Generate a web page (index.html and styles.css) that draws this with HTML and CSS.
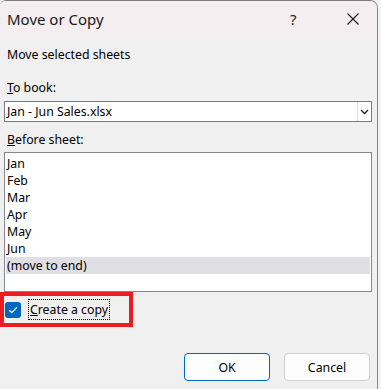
FILE: index.html
```html
<!DOCTYPE html>
<html>
<head>
<meta charset="utf-8">
<link rel="stylesheet" href="styles.css">
</head>
<body>
<div class="window">
  <div class="titlebar">
    <span class="title">Move or Copy</span>
    <span class="help">?</span>
    <span class="close">
      <svg width="14" height="14" viewBox="0 0 14 14"><path d="M1.5 1.5 L12.5 12.5 M12.5 1.5 L1.5 12.5" stroke="#1a1a1a" stroke-width="1.1" fill="none"/></svg>
    </span>
  </div>
  <div class="content">
    <div class="label first">Move selected sheets</div>
    <div class="label"><u>T</u>o book:</div>
    <div class="select">
      <span class="select-value">Jan - Jun Sales.xlsx</span>
      <span class="select-arrow">
        <svg width="9" height="6" viewBox="0 0 9 6"><path d="M1 1 L4.5 4.5 L8 1" stroke="#222" stroke-width="1.3" fill="none"/></svg>
      </span>
    </div>
    <div class="label after-select"><u>B</u>efore sheet:</div>
    <div class="listbox">
      <div class="item">Jan</div>
      <div class="item">Feb</div>
      <div class="item">Mar</div>
      <div class="item">Apr</div>
      <div class="item">May</div>
      <div class="item">Jun</div>
      <div class="item selected">(move to end)</div>
    </div>
    <div class="highlight">
      <span class="checkbox">
        <svg width="10" height="8" viewBox="0 0 10 8"><path d="M1.2 4.2 L3.8 6.6 L8.8 1.4" stroke="#fff" stroke-width="1.3" fill="none"/></svg>
      </span>
      <span class="check-label"><u>C</u>reate a copy</span>
    </div>
    <div class="buttons">
      <button class="btn primary">OK</button>
      <button class="btn">Cancel</button>
    </div>
  </div>
</div>
</body>
</html>
```
FILE: styles.css
```css
html, body {
  margin: 0;
  padding: 0;
  background: #f3f3f3;
}
body {
  font-family: "Noto Sans", "Open Sans", sans-serif;
  font-size: 12.3px;
  color: #000;
  width: 381px;
  height: 389px;
  overflow: hidden;
}
.window {
  width: 378px;
  height: 389px;
  background: #f0f0f0;
  border-top: 1px solid #7d7d7d;
  border-right: 1px solid #8a8a8a;
  border-top-right-radius: 8px;
  border-top-left-radius: 6px;
  overflow: hidden;
  box-sizing: border-box;
}
.titlebar {
  height: 36px;
  background: #f4eef1;
  display: flex;
  align-items: center;
}
.title {
  font-size: 15px;
  padding-left: 7px;
  flex: 1;
  color: #1a1a1a;
}
.help {
  font-size: 15px;
  width: 20px;
  margin-right: 36px;
  color: #1a1a1a;
}
.close {
  width: 14px;
  height: 14px;
  margin-right: 17px;
  display: flex;
}
.label {
  height: 16px;
  line-height: 16px;
  padding-left: 7px;
  margin-top: 17px;
}
.label.first {
  margin-top: 10px;
}
.label.after-select {
  margin-top: 10px;
}
.select {
  margin: 5px 0 0 4px;
  width: 368px;
  height: 21px;
  box-sizing: border-box;
  border: 1px solid #7a7a7a;
  background: #fff;
  display: flex;
  align-items: center;
}
.select-value {
  flex: 1;
  padding-left: 2px;
}
.select-arrow {
  width: 13px;
  height: 19px;
  border-left: 1px solid #e2e2e2;
  display: flex;
  align-items: center;
  justify-content: center;
}
.listbox {
  margin: 4px 0 0 4px;
  width: 368px;
  height: 140px;
  box-sizing: border-box;
  border: 1px solid #828790;
  background: #fff;
  padding: 2px 1px 0 1px;
}
.item {
  height: 17px;
  line-height: 17px;
  padding-left: 1px;
}
.item.selected {
  background: #e0dfe3;
}
.highlight {
  width: 133px;
  height: 35px;
  box-sizing: border-box;
  border: 4px solid #ec1c24;
  display: flex;
  align-items: center;
  margin-top: 0;
}
.checkbox {
  width: 16px;
  height: 16px;
  border-radius: 3px;
  background: #0067c0;
  display: flex;
  align-items: center;
  justify-content: center;
  margin-left: 1px;
}
.check-label {
  margin-left: 7px;
  padding: 1px 1px;
  border: 1px dotted #000;
  line-height: 17px;
}
.buttons {
  display: flex;
  justify-content: flex-end;
  gap: 14px;
  margin-top: 26px;
  padding-right: 7px;
}
.btn {
  width: 86px;
  height: 28px;
  border-radius: 4px;
  border: 1px solid #d0d0d0;
  background: #fdfdfd;
  font-family: "Noto Sans", "Open Sans", sans-serif;
  font-size: 12.3px;
  color: #000;
  padding: 0;
}
.btn.primary {
  border-color: #0067c0;
}
```
